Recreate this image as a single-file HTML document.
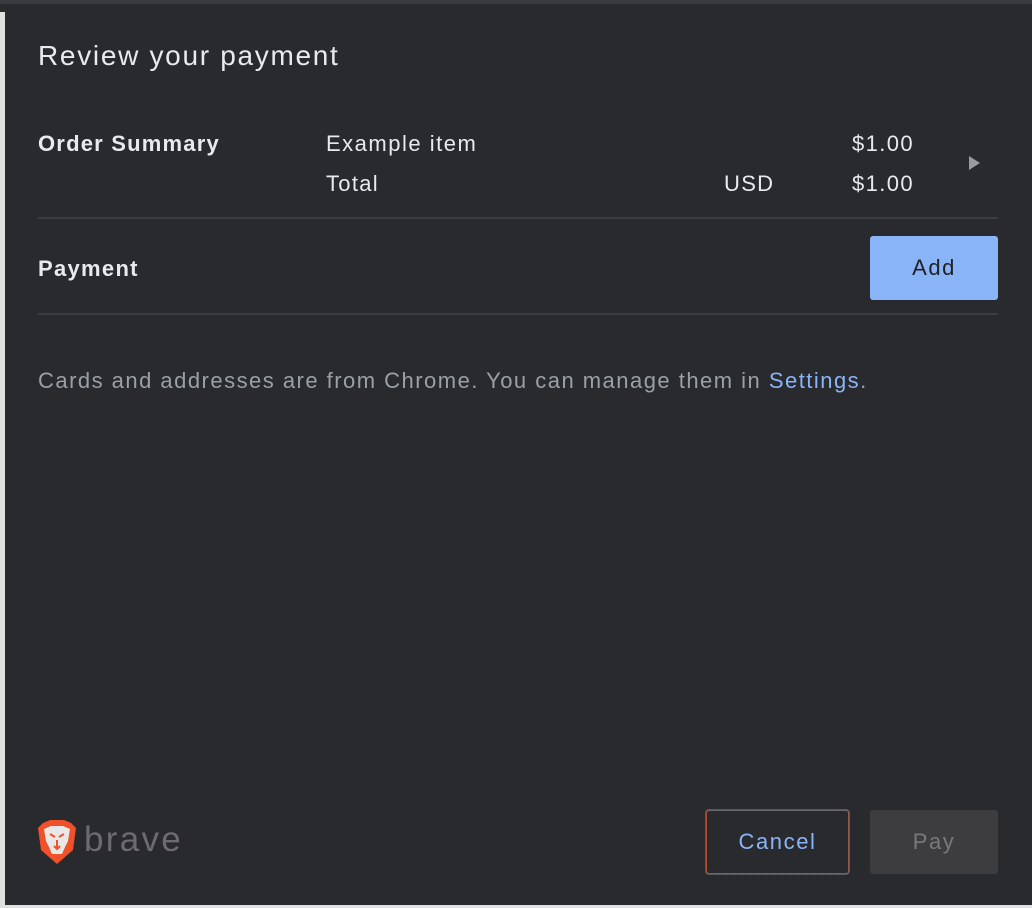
<!DOCTYPE html>
<html><head><meta charset="utf-8"><style>
*{margin:0;padding:0;box-sizing:border-box}
html,body{width:1032px;height:908px;overflow:hidden;background:#292a2d;font-family:"Liberation Sans",sans-serif;position:relative}
.top{position:absolute;left:0;top:0;width:1032px;height:4px;background:#3a3b3e}
.left{position:absolute;left:0;top:12px;width:5px;height:896px;background:#dfe1df}
.bottom{position:absolute;left:0;top:905px;width:1032px;height:3px;background:#dfe1df}
.t{position:absolute;color:#e8eaed;white-space:nowrap;font-size:22px;letter-spacing:1.3px}
.hr{position:absolute;left:38px;width:960px;height:2px;background:#3b3c3f}
</style></head><body>
<div class="top"></div><div class="left"></div><div class="bottom"></div>
<div class="t" style="left:38px;top:40px;font-size:28px;letter-spacing:1.7px">Review your payment</div>
<div class="t" style="left:38px;top:131px;font-weight:bold;letter-spacing:1.2px">Order Summary</div>
<div class="t" style="left:326px;top:131px;letter-spacing:1.5px">Example item</div>
<div class="t" style="left:852px;top:131px;letter-spacing:1.4px">$1.00</div>
<div class="t" style="left:326px;top:171px">Total</div>
<div class="t" style="left:724px;top:171px">USD</div>
<div class="t" style="left:852px;top:171px;letter-spacing:1.4px">$1.00</div>
<div style="position:absolute;left:969px;top:156px;width:0;height:0;border-left:11px solid #9a9b9e;border-top:7px solid transparent;border-bottom:7px solid transparent"></div>
<div class="hr" style="top:217px"></div>
<div class="t" style="left:38px;top:256px;font-weight:bold">Payment</div>
<div style="position:absolute;left:870px;top:236px;width:128px;height:64px;background:#8ab4f8;border-radius:3px;color:#202124;font-size:22px;letter-spacing:1.5px;display:flex;align-items:center;justify-content:center">Add</div>
<div class="hr" style="top:313px"></div>
<div class="t" style="left:38px;top:368px;color:#9aa0a6;letter-spacing:1.48px">Cards and addresses are from Chrome. You can manage them in <span style="color:#8ab4f8">Settings</span>.</div>
<svg style="position:absolute;left:37px;top:820px" width="40" height="44" viewBox="0 0 40 44">
<path d="M6 3 L13 0 H27 L34 3 L39 8 L36 30 L20 44 L4 30 L1 8 Z" fill="#f0502a"/>
<path d="M7 9 L14 6 H26 L33 9 L31 21 L28 27 L25 34 H15 L12 27 L9 21 Z" fill="#e8e8e8"/>
<path d="M13 14 L18 17 M27 14 L22 17 M17 26 L20 29 L23 26 M20 20 V28" stroke="#f0502a" stroke-width="2" fill="none"/>
</svg>
<div class="t" style="left:84px;top:820px;font-size:35px;color:#6e6b70;letter-spacing:2.3px">brave</div>
<div style="position:absolute;left:705px;top:809px;width:145px;height:66px;border:2px solid #5a5a5e;border-radius:4px;outline:1px dotted #e0502a;outline-offset:-2px;color:#8ab4f8;font-size:22px;letter-spacing:1.6px;display:flex;align-items:center;justify-content:center">Cancel</div>
<div style="position:absolute;left:870px;top:810px;width:128px;height:64px;background:#3d3d3f;border-radius:3px;color:#78797c;font-size:22px;letter-spacing:1.5px;display:flex;align-items:center;justify-content:center">Pay</div>
</body></html>
